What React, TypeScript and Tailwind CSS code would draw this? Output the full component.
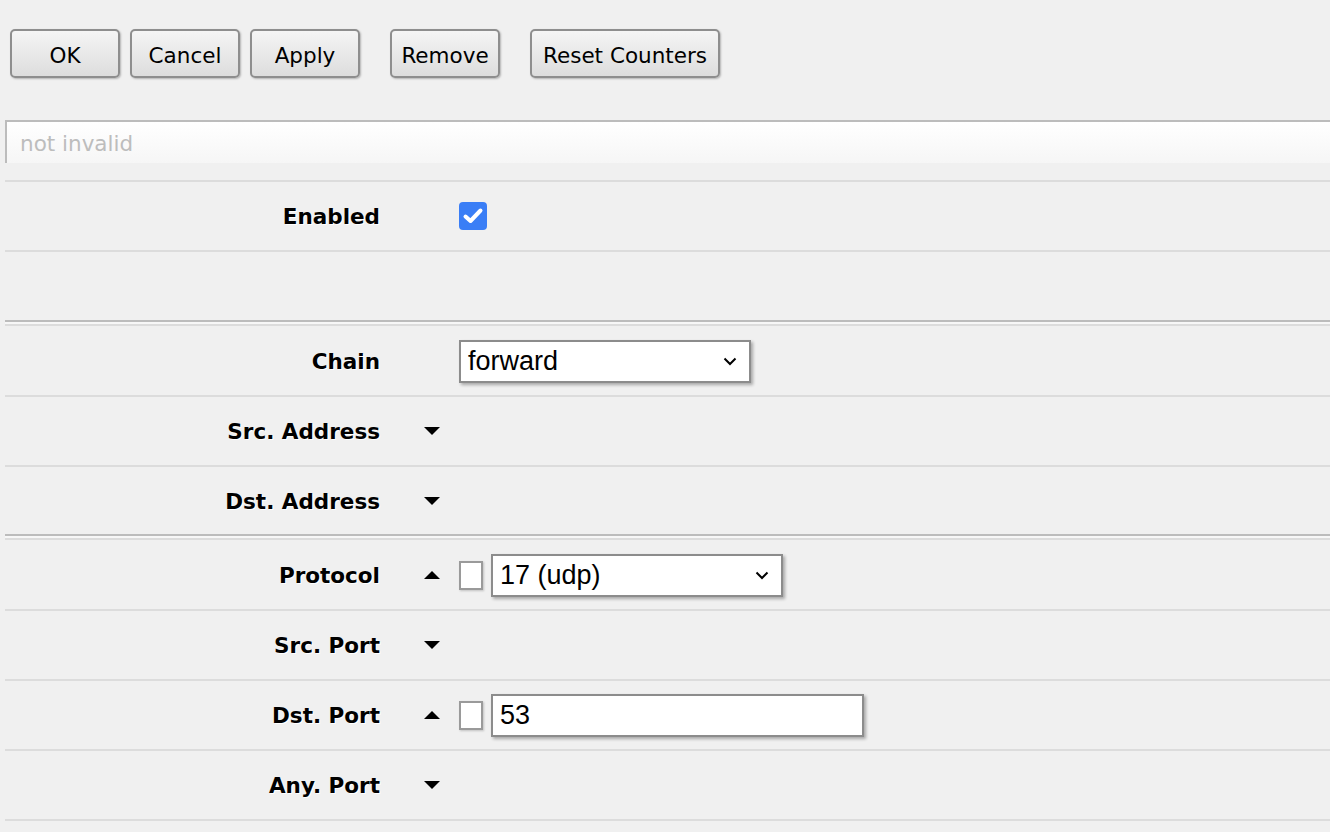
import React from 'react';

const sans = "font-['DejaVu_Sans',Verdana,sans-serif]";
const field = "font-['Liberation_Sans',Arial,sans-serif] text-[27px] text-black";

function Btn({ label, width }: { label: string; width: string }) {
  return (
    <button
      type="button"
      className={`${width} h-[49px] rounded-[5px] border-2 border-[#8e8e8e] bg-gradient-to-b from-[#f5f5f5] to-[#dddddd] pt-[5px] text-[21.5px] text-black shadow-[1px_1px_2px_rgba(0,0,0,0.25)]`}
    >
      {label}
    </button>
  );
}

function Arrow({ up }: { up?: boolean }) {
  return (
    <svg width="18" height="10" viewBox="0 0 18 10" className="block">
      {up ? <path d="M9 1 L17 9 L1 9 Z" fill="#000" /> : <path d="M1 1 L17 1 L9 9 Z" fill="#000" />}
    </svg>
  );
}

function Chevron() {
  return (
    <svg width="14" height="9" viewBox="0 0 14 9" className="block">
      <path d="M1.5 1.5 L7 7 L12.5 1.5" fill="none" stroke="#000" strokeWidth="2" />
    </svg>
  );
}

function Row({
  label,
  arrow,
  last,
  short,
  children,
}: {
  label?: string;
  arrow?: 'up' | 'down';
  last?: boolean;
  short?: boolean;
  children?: React.ReactNode;
}) {
  const h = last ? (short ? 'h-[67px]' : 'h-[68px]') : 'h-[70px] border-b-2 border-[#dcdcdc]';
  return (
    <div className={`flex items-center ${h}`}>
      <div className="w-[375px] pt-[3px] text-right text-[21.5px] font-bold text-black [text-shadow:1px_1px_0_#fff]">
        {label}
      </div>
      <div className="flex w-[79px] pl-[43px]">{arrow && <Arrow up={arrow === 'up'} />}</div>
      <div className="flex items-center gap-[8px]">{children}</div>
    </div>
  );
}

function SmallBox() {
  return <div className="h-[29px] w-[24px] border-2 border-[#9a9a9a] bg-white shadow-[1px_1px_2px_rgba(0,0,0,0.2)]" />;
}

function Select({ value, width }: { value: string; width: string }) {
  return (
    <div
      className={`${width} flex h-[43px] items-center justify-between border-2 border-[#8c8c8c] bg-white pl-[7px] pr-[12px] shadow-[2px_2px_3px_rgba(0,0,0,0.3)] ${field}`}
    >
      <span>{value}</span>
      <Chevron />
    </div>
  );
}

function Separator() {
  return (
    <div className="pb-[1px]">
      <div className="h-[2px] bg-[#bcbcbc]" />
      <div className="h-[2px] bg-[#f7f7f7]" />
      <div className="h-[2px] bg-[#dcdcdc]" />
    </div>
  );
}

export default function App() {
  return (
    <div className={`min-h-screen overflow-hidden bg-[#f0f0f0] ${sans}`}>
      {/* toolbar */}
      <div className="flex pl-[10px] pt-[29px]">
        <div className="flex gap-[10px]">
          <Btn label="OK" width="w-[110px]" />
          <Btn label="Cancel" width="w-[110px]" />
          <Btn label="Apply" width="w-[110px]" />
        </div>
        <div className="ml-[30px] flex gap-[30px]">
          <Btn label="Remove" width="w-[110px]" />
          <Btn label="Reset Counters" width="w-[190px]" />
        </div>
      </div>

      {/* comment */}
      <div className="ml-[5px] mt-[42px] flex h-[43px] items-center border-l-2 border-t-2 border-[#bcbcbc] bg-gradient-to-b from-white to-[#f6f6f6] pl-[13px] pt-[3px]">
        <span className="text-[21.5px] text-[#bdbdbd]">not invalid</span>
      </div>

      <div className="ml-[5px] mt-[17px] border-t-2 border-[#dcdcdc]">
        <Row label="Enabled">
          <div className="flex h-[28px] w-[28px] items-center justify-center rounded-[4px] bg-[#3a7ef6]">
            <svg width="22" height="18" viewBox="0 0 22 18">
              <path d="M3.5 9.5 L8.5 14 L18.5 3.5" fill="none" stroke="#fff" strokeWidth="4" strokeLinecap="round" strokeLinejoin="round" />
            </svg>
          </div>
        </Row>
        <Row last />
        <Separator />
        <Row label="Chain">
          <Select value="forward" width="w-[292px]" />
        </Row>
        <Row label="Src. Address" arrow="down" />
        <Row label="Dst. Address" arrow="down" last short />
        <Separator />
        <Row label="Protocol" arrow="up">
          <SmallBox />
          <Select value="17 (udp)" width="w-[292px]" />
        </Row>
        <Row label="Src. Port" arrow="down" />
        <Row label="Dst. Port" arrow="up">
          <SmallBox />
          <div className={`flex h-[43px] w-[373px] items-center border-2 border-[#8c8c8c] bg-white pl-[7px] shadow-[2px_2px_3px_rgba(0,0,0,0.3)] ${field}`}>
            53
          </div>
        </Row>
        <Row label="Any. Port" arrow="down" />
      </div>
    </div>
  );
}
